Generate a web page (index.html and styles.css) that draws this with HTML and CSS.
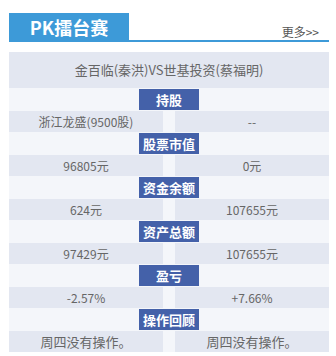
FILE: index.html
```html
<!DOCTYPE html>
<html lang="zh">
<head>
<meta charset="utf-8">
<link rel="stylesheet" href="styles.css">
</head>
<body>
<div class="wrap">
  <div class="head">
    <div class="tab">PK擂台赛</div>
    <a class="more">更多&gt;&gt;</a>
  </div>
  <div class="board">
    <div class="title">金百临(秦洪)VS世基投资(蔡福明)</div>
    <div class="label-row"><span class="label">持股</span></div>
    <div class="data-row"><span class="cell">浙江龙盛(9500股)</span><span class="cell">--</span></div>
    <div class="label-row"><span class="label">股票市值</span></div>
    <div class="data-row"><span class="cell">96805元</span><span class="cell">0元</span></div>
    <div class="label-row"><span class="label">资金余额</span></div>
    <div class="data-row"><span class="cell">624元</span><span class="cell">107655元</span></div>
    <div class="label-row"><span class="label">资产总额</span></div>
    <div class="data-row"><span class="cell">97429元</span><span class="cell">107655元</span></div>
    <div class="label-row"><span class="label">盈亏</span></div>
    <div class="data-row"><span class="cell">-2.57%</span><span class="cell">+7.66%</span></div>
    <div class="label-row"><span class="label">操作回顾</span></div>
    <div class="data-row big"><span class="cell">周四没有操作。</span><span class="cell">周四没有操作。</span></div>
  </div>
</div>
</body>
</html>
```
FILE: styles.css
```css
html, body {
  margin: 0;
  padding: 0;
  background: #fff;
}
body {
  font-family: "Noto Sans CJK SC", "Liberation Sans", sans-serif;
  color: #666;
}
.wrap {
  width: 320px;
  padding: 13px 0 0 9px;
}
.head {
  display: flex;
  justify-content: space-between;
  align-items: flex-end;
  height: 27px;
  border-bottom: 2px solid #3d9ad8;
}
.tab {
  width: 120px;
  height: 28px;
  align-self: flex-start;
  background: #3d9ad8;
  color: #fff;
  font-weight: bold;
  font-size: 18px;
  line-height: 28px;
  text-align: center;
}
.more {
  font-size: 12px;
  line-height: 16px;
  color: #555;
  padding-right: 10px;
}
.board {
  margin-top: 10px;
  background: #f4f6fa;
  display: flex;
  flex-direction: column;
  gap: 1px;
}
.title {
  height: 36px;
  background: #e3e7f1;
  font-size: 13px;
  line-height: 36px;
  text-align: center;
  color: #666;
}
.label-row {
  height: 21px;
  display: flex;
  justify-content: center;
}
.label {
  width: 60px;
  background: #4461a9;
  color: #fff;
  font-weight: bold;
  font-size: 13px;
  line-height: 21px;
  text-align: center;
}
.data-row {
  height: 21px;
  display: grid;
  grid-template-columns: 154px 154px;
  column-gap: 12px;
}
.cell {
  background: #e3e7f1;
  font-size: 12px;
  line-height: 21px;
  text-align: center;
  color: #666;
}
.data-row.big .cell {
  font-size: 13px;
}
```
